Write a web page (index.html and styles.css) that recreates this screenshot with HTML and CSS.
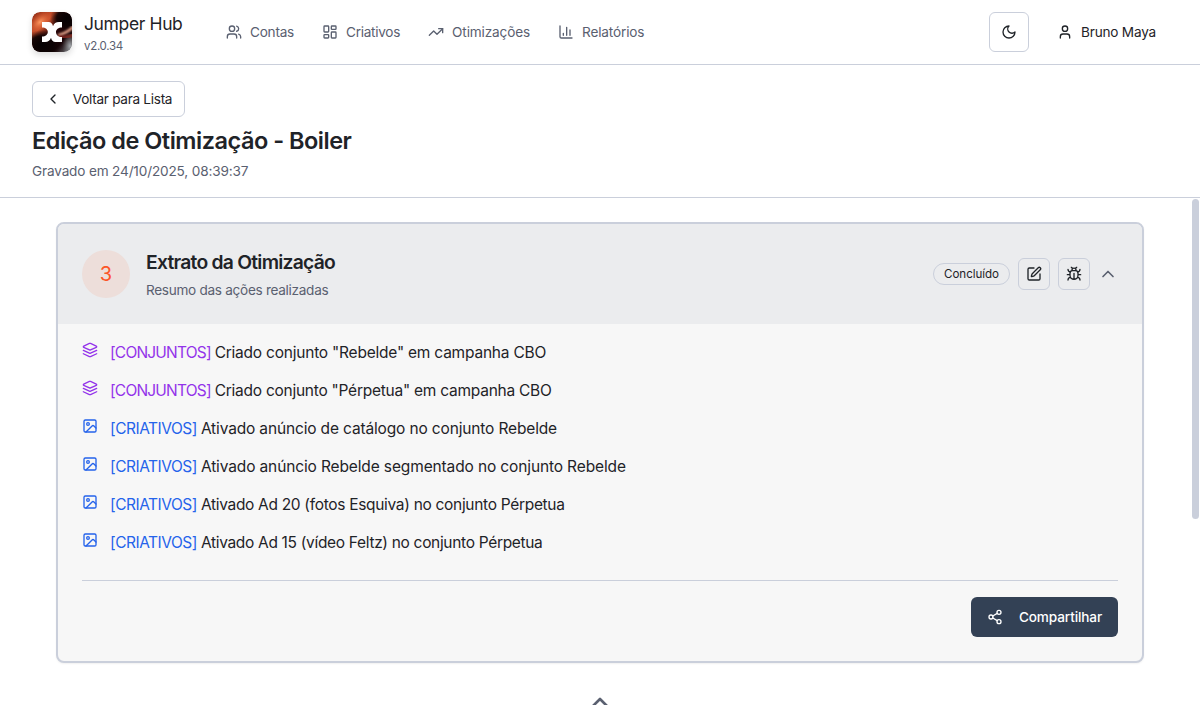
FILE: index.html
```html
<!DOCTYPE html>
<html lang="pt-BR">
<head>
<meta charset="utf-8">
<title>Jumper Hub</title>
<link rel="stylesheet" href="styles.css">
</head>
<body>
<svg class="defs" width="0" height="0">
  <symbol id="layers" viewBox="0 0 24 24"><path d="m12.83 2.18a2 2 0 0 0-1.66 0L2.6 6.08a1 1 0 0 0 0 1.83l8.58 3.91a2 2 0 0 0 1.66 0l8.58-3.9a1 1 0 0 0 0-1.83Z"/><path d="m22 17.65-9.17 4.16a2 2 0 0 1-1.66 0L2 17.65"/><path d="m22 12.65-9.17 4.16a2 2 0 0 1-1.66 0L2 12.65"/></symbol>
  <symbol id="image" viewBox="0 0 24 24"><rect width="18" height="18" x="3" y="3" rx="2"/><circle cx="9" cy="9" r="2"/><path d="m21 15-3.086-3.086a2 2 0 0 0-2.828 0L6 21"/></symbol>
</svg>
<header class="topbar">
  <div class="brand">
    <svg class="logo" viewBox="0 0 40 40">
      <defs>
        <linearGradient id="base" x1="0" y1="0" x2="1" y2="1"><stop offset="0" stop-color="#8a2a14"/><stop offset=".3" stop-color="#c9502c"/><stop offset=".5" stop-color="#2a0508"/><stop offset=".75" stop-color="#160306"/><stop offset="1" stop-color="#777b80"/></linearGradient>
        <radialGradient id="dark"><stop offset="0" stop-color="#050102"/><stop offset=".6" stop-color="#0c0203" stop-opacity=".9"/><stop offset="1" stop-color="#180405" stop-opacity="0"/></radialGradient>
        <radialGradient id="glow"><stop offset="0" stop-color="#ff9a62"/><stop offset="1" stop-color="#d54b22" stop-opacity="0"/></radialGradient>
        <radialGradient id="haze"><stop offset="0" stop-color="#a4a8ac"/><stop offset="1" stop-color="#666" stop-opacity="0"/></radialGradient>
        <filter id="soft"><feGaussianBlur stdDeviation="1.1"/></filter>
        <clipPath id="round"><rect width="40" height="40" rx="8"/></clipPath>
      </defs>
      <g clip-path="url(#round)">
        <rect width="40" height="40" fill="url(#base)"/>
        <ellipse cx="8" cy="10" rx="15" ry="9" fill="url(#glow)" transform="rotate(-40 8 10)"/>
        <ellipse cx="35" cy="6" rx="17" ry="14" fill="url(#dark)"/>
        <ellipse cx="10" cy="33" rx="20" ry="15" fill="url(#dark)"/>
        <ellipse cx="38" cy="34" rx="8" ry="13" fill="url(#haze)"/>
        <path d="M27 23Q35 21 41 15" stroke="#e8a58c" stroke-width="2.6" fill="none" filter="url(#soft)"/>
        <path d="M27 25Q35 26 41 23" stroke="#8b2c20" stroke-width="3" fill="none" filter="url(#soft)"/>
      </g>
      <path d="M10 10h6.500c2.500 0 4 1.800 4.500 4.200C21.800 11.600 24 10 27 10h3v5.500c-3.600 0-6 1.800-6 4.500 0 3.100 2.400 5 6 5v5h-6.500c-2.600 0-4-1.800-4.500-4.200C18.300 28.400 16.200 30 13 30h-3v-5.500c3.600 0 5.800-1.800 5.800-4.500S13.600 15.500 10 15.500z" fill="#fff"/>
    </svg>
    <div class="brand-text"><span class="t brand-name">Jumper Hub</span><span class="t version">v2.0.34</span></div>
  </div>
  <nav class="nav">
    <a class="link"><svg class="icon" viewBox="0 0 24 24"><path d="M16 21v-2a4 4 0 0 0-4-4H6a4 4 0 0 0-4 4v2"/><circle cx="9" cy="7" r="4"/><path d="M22 21v-2a4 4 0 0 0-3-3.870M16 3.130a4 4 0 0 1 0 7.750"/></svg><span class="t contas">Contas</span></a>
    <a class="link"><svg class="icon" viewBox="0 0 24 24"><rect width="7" height="9" x="3" y="3" rx="1"/><rect width="7" height="5" x="14" y="3" rx="1"/><rect width="7" height="9" x="14" y="12" rx="1"/><rect width="7" height="5" x="3" y="16" rx="1"/></svg><span class="t criativos">Criativos</span></a>
    <a class="link"><svg class="icon" viewBox="0 0 24 24"><path d="M22 7 13.500 15.500 8.500 10.500 2 17"/><path d="M16 7h6v6"/></svg><span class="t otimizacoes">Otimizações</span></a>
    <a class="link"><svg class="icon" viewBox="0 0 24 24"><path d="M3 3v16a2 2 0 0 0 2 2h16M18 17V9M13 17V5M8 17v-3"/></svg><span class="t relatorios">Relatórios</span></a>
  </nav>
  <div class="account">
    <button class="theme"><svg class="icon" viewBox="0 0 24 24"><path d="M12 3a6 6 0 0 0 9 9 9 9 0 1 1-9-9Z"/></svg></button>
    <div class="user"><svg class="icon" viewBox="0 0 24 24"><path d="M19 21v-2a4 4 0 0 0-4-4H9a4 4 0 0 0-4 4v2"/><circle cx="12" cy="7" r="4"/></svg><span class="t user-name">Bruno Maya</span></div>
  </div>
</header>
<section class="page-head">
  <button class="back"><svg class="icon" viewBox="0 0 24 24"><path d="m15 18-6-6 6-6"/></svg><span class="t back-label">Voltar para Lista</span></button>
  <h1><span class="t title">Edição de Otimização - Boiler</span></h1>
  <p class="muted"><span class="t recorded">Gravado em 24/10/2025, 08:39:37</span></p>
</section>
<main class="content">
  <article class="card">
    <header class="card-head">
      <div class="step">3</div>
      <div class="card-titles"><h2><span class="t card-title">Extrato da Otimização</span></h2><p class="muted"><span class="t summary">Resumo das ações realizadas</span></p></div>
      <div class="actions">
        <span class="badge"><span class="t badge-label">Concluído</span></span>
        <button class="square"><svg class="icon" viewBox="0 0 24 24"><path d="M12 3H5a2 2 0 0 0-2 2v14a2 2 0 0 0 2 2h14a2 2 0 0 0 2-2v-7"/><path d="M18.375 2.625a1 1 0 0 1 3 3l-9.013 9.014a2 2 0 0 1-.853.505l-2.873.84a.5.5 0 0 1-.62-.62l.84-2.873a2 2 0 0 1 .506-.852z"/></svg></button>
        <button class="square"><svg class="icon" viewBox="0 0 24 24"><path d="m8 2 1.880 1.880M14.120 3.880 16 2M9 7.130v-1a3 3 0 1 1 6 0v1M12 20c-3.300 0-6-2.700-6-6v-3a4 4 0 0 1 4-4h4a4 4 0 0 1 4 4v3c0 3.300-2.700 6-6 6M12 20v-9M6.530 9C4.600 8.800 3 7.100 3 5M6 13H2M3 21c0-2.100 1.700-3.900 3.800-4M20.970 5c0 2.100-1.600 3.800-3.500 4M22 13h-4M17.200 17c2.100.1 3.800 1.900 3.800 4"/></svg></button>
        <svg class="chevron" viewBox="0 0 24 24"><path d="m18 15-6-6-6 6"/></svg>
      </div>
    </header>
    <div class="card-body">
      <ul class="list">
        <li><svg class="icon sets"><use href="#layers"/></svg><span><span class="t sets set-tag">[CONJUNTOS]</span> <span class="t row1">Criado conjunto "Rebelde" em campanha CBO</span></span></li>
        <li><svg class="icon sets"><use href="#layers"/></svg><span><span class="t sets set-tag">[CONJUNTOS]</span> <span class="t row2">Criado conjunto "Pérpetua" em campanha CBO</span></span></li>
        <li><svg class="icon ads"><use href="#image"/></svg><span><span class="t ads ad-tag">[CRIATIVOS]</span> <span class="t row3">Ativado anúncio de catálogo no conjunto Rebelde</span></span></li>
        <li><svg class="icon ads"><use href="#image"/></svg><span><span class="t ads ad-tag">[CRIATIVOS]</span> <span class="t row4">Ativado anúncio Rebelde segmentado no conjunto Rebelde</span></span></li>
        <li><svg class="icon ads"><use href="#image"/></svg><span><span class="t ads ad-tag">[CRIATIVOS]</span> <span class="t row5">Ativado Ad 20 (fotos Esquiva) no conjunto Pérpetua</span></span></li>
        <li><svg class="icon ads"><use href="#image"/></svg><span><span class="t ads ad-tag">[CRIATIVOS]</span> <span class="t row6">Ativado Ad 15 (vídeo Feltz) no conjunto Pérpetua</span></span></li>
      </ul>
      <footer class="card-foot"><button class="share"><svg class="icon" viewBox="0 0 24 24"><circle cx="18" cy="5" r="3"/><circle cx="6" cy="12" r="3"/><circle cx="18" cy="19" r="3"/><path d="m8.590 13.510 6.830 3.980M15.410 6.510l-6.820 3.980"/></svg><span class="t share-label">Compartilhar</span></button></footer>
    </div>
  </article>
  <svg class="expand" viewBox="0 0 24 24"><path d="m18 15-6-6-6 6"/></svg>
  <div class="scrollbar"></div>
</main>
</body>
</html>
```
FILE: styles.css
```css
* { box-sizing: border-box; }
body { margin: 0; height: 705px; overflow: hidden; display: flex; flex-direction: column; background: #fff; color: #1f2328; font: 13.6px/20px Inter, sans-serif; }
h1, h2, p, ul { margin: 0; padding: 0; font-weight: inherit; }
button { font: inherit; color: inherit; background: none; padding: 0; border: 1px solid #cacfdb; border-radius: 6px; display: flex; align-items: center; justify-content: center; }
svg { flex: none; fill: none; stroke: currentColor; stroke-width: 2; stroke-linecap: round; stroke-linejoin: round; }
.t { white-space: nowrap; }
.defs { position: absolute; }
.icon { width: 16px; height: 16px; }
.muted { color: #5a6070; }

.topbar { height: 65px; flex: none; display: flex; align-items: center; padding: 0 44px 0 32px; border-bottom: 1px solid #cacfdb; }
.brand { display: flex; align-items: center; gap: 12px; width: 194px; }
.logo { width: 40px; height: 40px; stroke: none; border-radius: 8px; box-shadow: 0 3px 6px rgba(0,0,0,.14); }
.brand-text { display: flex; flex-direction: column; }
.brand-name { font-size: 17.5px; line-height: 28px; letter-spacing: -.37px; }
.version { font-size: 11.5px; line-height: 16px; letter-spacing: -.3px; color: #5a6070; }
.nav { display: flex; gap: 28px; color: #5a6070; }
.link { display: flex; align-items: center; gap: 8px; }
.contas { letter-spacing: -.24px; }
.criativos { letter-spacing: -.28px; }
.otimizacoes { letter-spacing: -.14px; }
.relatorios { letter-spacing: -.16px; }
.account { display: flex; align-items: center; gap: 28px; margin-left: auto; }
.theme { width: 40px; height: 40px; }
.user { display: flex; align-items: center; gap: 8px; }
.user-name { letter-spacing: -.2px; }

.page-head { height: 133px; flex: none; padding: 16px 32px; border-bottom: 1px solid #cacfdb; }
.back { height: 36px; width: 153px; gap: 12px; }
.back-label { letter-spacing: -.29px; }
.page-head h1 { font-size: 23.5px; line-height: 32px; font-weight: 600; margin-top: 8px; }
.title { letter-spacing: -.49px; }
.page-head p { margin-top: 4px; }
.recorded { letter-spacing: -.16px; }

.content { position: relative; flex: 1; min-height: 0; padding: 24px 56px 0; display: flex; flex-direction: column; align-items: center; overflow: hidden; }
.card { width: 100%; flex: none; border: 2px solid #cacfdb; border-radius: 8px; background: #f7f7f7; overflow: hidden; box-shadow: 0 1px 2px rgba(0,0,0,.06); }
.card-head { display: flex; align-items: center; gap: 16px; height: 100px; padding: 0 24px; background: #ebecee; }
.step { width: 48px; height: 48px; border-radius: 50%; background: #eddeda; color: #fc5527; display: flex; align-items: center; justify-content: center; font-size: 20px; }
.card-titles h2 { font-size: 19.3px; line-height: 28px; font-weight: 600; }
.card-title { letter-spacing: -.75px; }
.card-titles p { margin-top: 4px; }
.summary { letter-spacing: -.3px; }
.actions { display: flex; align-items: center; gap: 8px; margin-left: auto; }
.badge { width: 77px; height: 22px; border: 1px solid #cacfdb; border-radius: 11px; font-size: 11.6px; line-height: 20px; text-align: center; }
.badge-label { letter-spacing: -.06px; }
.square { width: 32px; height: 32px; }
.chevron { width: 20px; height: 20px; color: #5a6070; }

.card-body { padding: 16px 24px 24px; }
.list { list-style: none; display: flex; flex-direction: column; gap: 12px; font-size: 15.5px; line-height: 26px; letter-spacing: -.5px; }
.list li { display: flex; gap: 12px; height: 26px; }
.list .icon { margin-top: 2px; }
.sets { color: #9333ea; }
.ads { color: #2563eb; }
.set-tag { letter-spacing: -.8px; }
.ad-tag { letter-spacing: -.48px; }
.row1 { letter-spacing: -.22px; }
.row2 { letter-spacing: -.25px; }
.row3 { letter-spacing: -.15px; }
.row4 { letter-spacing: -.13px; }
.row5 { letter-spacing: -.31px; }
.row6 { letter-spacing: -.32px; }
.card-foot { display: flex; justify-content: flex-end; margin-top: 24px; padding-top: 16px; border-top: 1px solid #cacfdb; }
.share { width: 147px; height: 40px; gap: 16px; border: 0; color: #fff; background: #334155; }
.share-label { font-weight: 500; letter-spacing: -.12px; }
.expand { width: 32px; height: 32px; margin-top: 24px; color: #5a6070; }
.scrollbar { position: absolute; top: 1px; right: 1px; width: 7px; height: 320px; border-radius: 4px; background: #cacfdb; }
```
